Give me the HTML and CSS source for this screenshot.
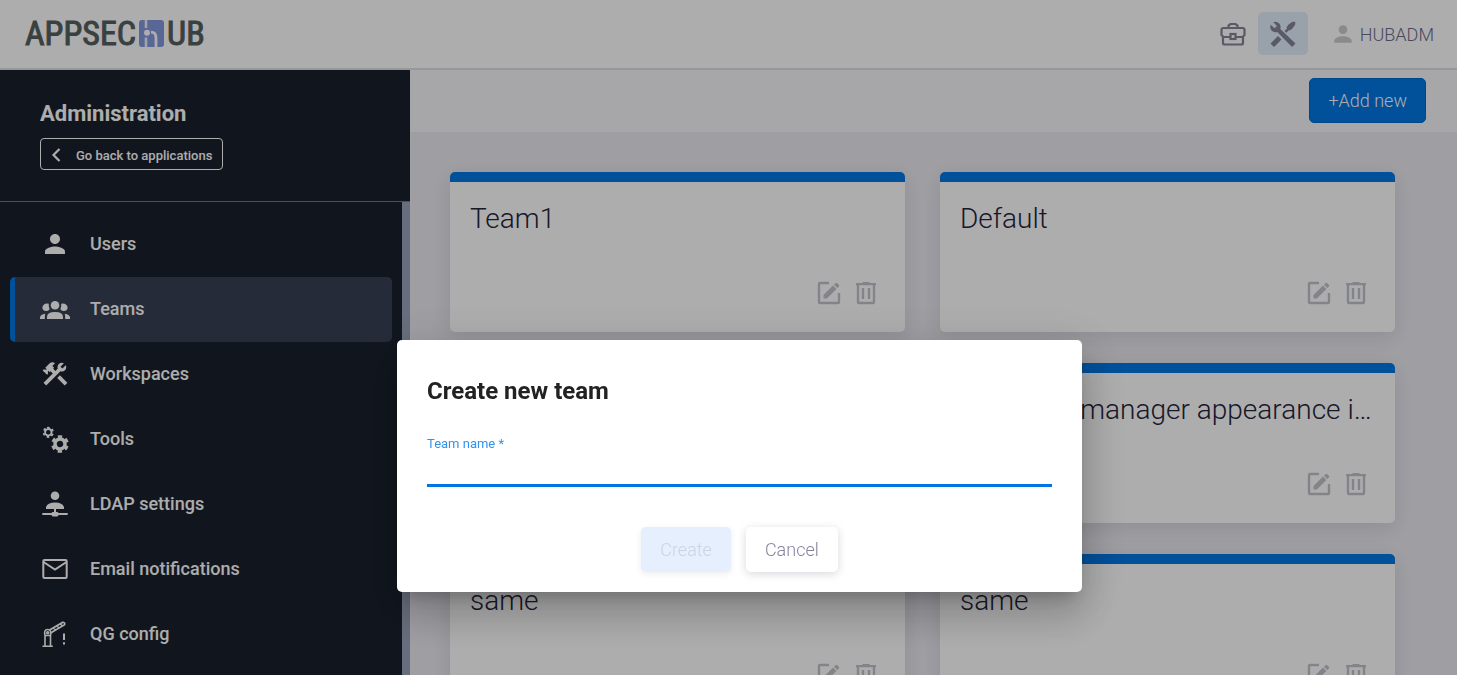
FILE: index.html
```html
<!DOCTYPE html>
<html lang="en">
<head>
<meta charset="utf-8">
<title>AppSecHub – Teams</title>
<link rel="stylesheet" href="styles.css">
</head>
<body>
<svg class="sprite" aria-hidden="true">
  <symbol id="edit" viewBox="0 0 24 24">
    <path d="M12 2H3Q2 2 2 3V21Q2 22 3 22H21Q22 22 22 21V12" fill="none" stroke="currentColor" stroke-width="2.400"/>
    <path d="M6.500 14 16 4.500 19.400 7.900 9.900 17.400H6.500zM17 3.700 18.800 1.900Q19.400 1.500 20 1.900L22 3.900Q22.500 4.500 22 5.200L20.300 6.900z" fill="currentColor"/>
  </symbol>
  <symbol id="trash" viewBox="0 0 20 24">
    <path d="M0 2H6L7 1H13L14 2H20V4.300H0zM5.800 7H8.200V18H5.800zM11.800 7H14.200V18H11.800z" fill="currentColor"/>
    <path d="M2 4V21Q2 22 3 22H17Q18 22 18 21V4" fill="none" stroke="currentColor" stroke-width="2.400"/>
  </symbol>
  <symbol id="person" viewBox="0 0 24 24">
    <path d="M12 12c2.21 0 4-1.79 4-4s-1.79-4-4-4-4 1.79-4 4 1.79 4 4 4zm0 2c-2.67 0-8 1.34-8 4v2h16v-2c0-2.66-5.33-4-8-4z" fill="currentColor"/>
  </symbol>
</svg>

<header class="topbar">
  <a class="logo" href="#" aria-label="AppSecHub">
    <span>APPSEC</span>
    <svg class="logo-mark" viewBox="0 0 25 27" aria-hidden="true">
      <rect width="25" height="27" rx="3" fill="#8498de"/>
      <path d="M7 0V8M7 17.500V27" fill="none" stroke="#fff" stroke-opacity=".85" stroke-width="2.600"/>
      <circle cx="8" cy="12.800" r="3" fill="#fff"/>
      <path d="M12 12.200Q17 12.200 17 18V27" fill="none" stroke="#fff" stroke-width="2.800"/>
    </svg>
    <span>UB</span>
  </a>
  <nav class="top-actions" aria-label="Account">
    <button class="top-btn" type="button" aria-label="Applications">
      <svg width="26" height="26" viewBox="0 0 26 26" fill="none" stroke="currentColor" stroke-width="2.200">
        <path d="M8.500 8V5.500L10.500 4H15.500L17.500 5.500V8"/>
        <path d="M10 17H3.500L1.500 15V10Q1.500 8 3.500 8H22.500Q24.500 8 24.500 10V15L22.500 17H16"/>
        <path d="M3 17V23Q3 24.500 5 24.500H21Q23 24.500 23 23V17"/>
        <rect x="10.500" y="14" width="5" height="5"/>
      </svg>
    </button>
    <button class="top-btn top-btn-active" type="button" aria-label="Administration">
      <svg width="28" height="28" viewBox="0 0 28 28" fill="currentColor">
        <path d="M4.200 3.200Q7.500 2 10.300 4.500Q12.300 7 11.300 10L26.500 24.500L23 28L8.300 13Q5 14 2.500 11.500Q.500 9 1.700 5.700L5.500 9.300L8 6.900z"/>
        <path d="M18.500 10.800L17.500 8.200L19.500 5.500L23.500 2.800H26.200V5.500L23.500 9.500L20.800 11.500zM18.300 9.300L20 11L17.300 13.700L15.500 12zM9 17L12.500 20.500L5 28L1.500 24.500z"/>
      </svg>
    </button>
    <a class="user" href="#">
      <svg width="26" height="26" aria-hidden="true"><use href="#person"/></svg>
      <span>HUBADM</span>
    </a>
  </nav>
</header>

<div class="layout">
  <aside class="sidebar">
    <div class="sidebar-head">
      <h1>Administration</h1>
      <button class="back" type="button">
        <svg width="10" height="14" viewBox="0 0 10 14" aria-hidden="true"><path d="M8.500 1 2.500 7 8.500 13" fill="none" stroke="currentColor" stroke-width="2.200"/></svg>
        <span>Go back to applications</span>
      </button>
    </div>
    <nav class="menu" aria-label="Administration">
      <a class="item" href="#"><svg class="icon"><use href="#person"/></svg><span>Users</span></a>
      <a class="item item-active" href="#" aria-current="page">
        <svg class="icon" viewBox="0 0 30 30" fill="currentColor">
          <circle cx="15" cy="11.300" r="4.300"/>
          <path d="M7 25V23Q7 18 15 18T23 23V25zM0 25V23.500Q.500 20.200 5.200 19.800Q4.800 21.500 4.800 25zM30 25V23.500Q29.500 20.200 24.800 19.800Q25.200 21.500 25.200 25z"/>
          <path d="M8.800 9.800Q6 9 4 10.500Q2 12 2.400 14.500Q3.500 17.500 6.800 17Q8.500 16.800 9.600 15.300Q8.300 12.500 8.800 9.800zM21.200 9.800Q24 9 26 10.500Q28 12 27.600 14.500Q26.500 17.500 23.200 17Q21.500 16.800 20.400 15.300Q21.700 12.500 21.200 9.800z"/>
        </svg><span>Teams</span></a>
      <a class="item" href="#">
        <svg class="icon" viewBox="0 0 24 24" fill="currentColor">
          <path d="M13.783 15.172l2.121-2.121 5.996 5.996-2.121 2.121zM17.5 10c1.930 0 3.500-1.570 3.500-3.500 0-.580-.160-1.120-.410-1.600l-2.700 2.700-1.490-1.490 2.700-2.700c-.480-.250-1.020-.410-1.600-.410C15.570 3 14 4.570 14 6.500c0 .410.080.800.210 1.160l-1.850 1.850-1.780-1.780.710-.710-1.410-1.410L12 3.490c-1.170-1.170-3.070-1.170-4.240 0L4.220 7.030l1.410 1.410H2.810l-.710.710 3.540 3.540.710-.710V9.150l1.410 1.410.710-.710 1.780 1.780-7.410 7.410 2.120 2.120L16.340 9.790c.360.130.750.210 1.160.210z"/>
        </svg><span>Workspaces</span></a>
      <a class="item" href="#">
        <svg class="icon" viewBox="0 0 30 30" fill="none" stroke="currentColor">
          <g transform="translate(8.300 8.300) rotate(-105)"><circle r="3.200" stroke-width="1.800"/><circle r="4.700" stroke-width="1.800" stroke-dasharray="2.450 2.470"/></g>
          <g transform="translate(20 20) rotate(-106)"><circle r="5" stroke-width="3.600"/><circle r="7.500" stroke-width="2.600" stroke-dasharray="4.200 3.654"/></g>
        </svg><span>Tools</span></a>
      <a class="item" href="#">
        <svg class="icon" viewBox="0 0 30 30" fill="currentColor">
          <circle cx="15" cy="6.700" r="4.300"/>
          <path d="M6 20V18Q7.500 13.500 15 13.500T24 18V20H16V23H17.500L18.700 24H27.700V26H18.700L17.500 27.500H12.500L11.300 26H2.300V24H11.300L12.500 23H14V20z"/>
        </svg><span>LDAP settings</span></a>
      <a class="item" href="#">
        <svg class="icon" viewBox="0 0 30 30" fill="none" stroke="currentColor" stroke-width="2">
          <rect x="3.300" y="6" width="23.400" height="18" rx="1.200"/><path d="M3.500 8 15 15.500 26.500 8"/>
        </svg><span>Email notifications</span></a>
      <a class="item" href="#">
        <svg class="icon" viewBox="0 0 30 30" fill="none" stroke="currentColor" stroke-width="1.600">
          <path d="M2.500 27.200H12.800M5 27V16.500H10.500V27M5 16.500Q3.500 10.500 7.700 10.500T10.500 16.500"/>
          <circle cx="7.700" cy="13.700" r="1"/>
          <path d="M9.500 11 23 3.200Q25.300 3.500 24.600 5.700L11 13.700M13.500 9 15.500 11M17 7 19 9M20.500 5 22.500 7" />
          <path d="M24 14.500V21M24 23.200V25.500" stroke-width="2"/>
        </svg><span>QG config</span></a>
    </nav>
  </aside>

  <main class="content">
    <div class="toolbar"><button class="btn btn-primary" type="button">+Add new</button></div>
    <div class="cards">
      <article class="card"><h2>Team1</h2><div class="card-actions"><button type="button" aria-label="Edit"><svg width="24" height="24"><use href="#edit"/></svg></button><button type="button" aria-label="Delete"><svg width="20" height="24"><use href="#trash"/></svg></button></div></article>
      <article class="card"><h2>Default</h2><div class="card-actions"><button type="button" aria-label="Edit"><svg width="24" height="24"><use href="#edit"/></svg></button><button type="button" aria-label="Delete"><svg width="20" height="24"><use href="#trash"/></svg></button></div></article>
      <article class="card"><h2></h2><div class="card-actions"><button type="button" aria-label="Edit"><svg width="24" height="24"><use href="#edit"/></svg></button><button type="button" aria-label="Delete"><svg width="20" height="24"><use href="#trash"/></svg></button></div></article>
      <article class="card"><h2>Checking manager appearance in team</h2><div class="card-actions"><button type="button" aria-label="Edit"><svg width="24" height="24"><use href="#edit"/></svg></button><button type="button" aria-label="Delete"><svg width="20" height="24"><use href="#trash"/></svg></button></div></article>
      <article class="card"><h2>same</h2><div class="card-actions"><button type="button" aria-label="Edit"><svg width="24" height="24"><use href="#edit"/></svg></button><button type="button" aria-label="Delete"><svg width="20" height="24"><use href="#trash"/></svg></button></div></article>
      <article class="card"><h2>same</h2><div class="card-actions"><button type="button" aria-label="Edit"><svg width="24" height="24"><use href="#edit"/></svg></button><button type="button" aria-label="Delete"><svg width="20" height="24"><use href="#trash"/></svg></button></div></article>
    </div>
  </main>
</div>

<div class="backdrop">
  <form class="dialog" role="dialog" aria-modal="true" aria-labelledby="dialog-title">
    <h2 id="dialog-title">Create new team</h2>
    <div class="field">
      <label for="team-name">Team name *</label>
      <input id="team-name" type="text" required>
    </div>
    <div class="dialog-actions">
      <button class="btn btn-create" type="submit" disabled>Create</button>
      <button class="btn btn-cancel" type="button">Cancel</button>
    </div>
  </form>
</div>
</body>
</html>
```

FILE: styles.css
```css
* { box-sizing: border-box; }

body {
  display: flex;
  flex-direction: column;
  height: 100vh;
  margin: 0;
  overflow: hidden;
  font-family: Roboto, "Liberation Sans", sans-serif;
  background: #ebeaf1;
  color: #25243d;
}

h1, h2 { margin: 0; }
a { color: inherit; text-decoration: none; }
button { font: inherit; cursor: pointer; }
svg { display: block; flex: none; }
.sprite { position: absolute; width: 0; height: 0; }

.topbar {
  display: flex;
  flex: none;
  justify-content: space-between;
  align-items: center;
  height: 70px;
  padding: 0 23px 2px 25px;
  background: #fff;
  border-bottom: 2px solid #dfdfdf;
}

.logo {
  display: flex;
  align-items: center;
  gap: 3px;
  color: #55605f;
  font-family: "Liberation Sans Narrow", "Roboto Condensed", Roboto, sans-serif;
  font-size: 34px;
  line-height: 40px;
  -webkit-text-stroke: 1px #55605f;
}
.logo-mark { width: 25px; height: 27px; }

.top-actions { display: flex; align-items: center; }
.top-btn {
  display: grid;
  place-items: center;
  width: 50px;
  height: 43px;
  padding: 0;
  border: 0;
  border-radius: 5px;
  background: none;
  color: #83839a;
}
.top-btn-active { background: #e2eefb; }
.user {
  display: flex;
  align-items: center;
  gap: 4px;
  margin-left: 22px;
  padding-top: 2px;
  color: #6d6c88;
  font-size: 18px;
  font-weight: 300;
}
.user svg { color: #ccc; }

.layout { display: flex; flex: 1; min-height: 0; }

.sidebar {
  display: flex;
  flex: none;
  flex-direction: column;
  width: 410px;
  background: #1a212d;
  color: #fff;
}
.sidebar-head {
  flex: none;
  height: 132px;
  padding: 28px 40px 0;
  border-bottom: 1px solid #777;
}
.sidebar-head h1 { font-size: 22px; font-weight: 700; line-height: 32px; }
.back {
  display: flex;
  align-items: center;
  gap: 15px;
  height: 32px;
  margin-top: 8px;
  padding: 2px 10px 0;
  border: 1px solid #fff;
  border-radius: 4px;
  background: none;
  color: #fff;
  font-size: 13px;
  font-weight: 500;
}
.menu {
  flex: 1;
  min-height: 0;
  padding: 10px 10px 0;
  overflow: hidden;
  border-right: 8px solid #99a3b9;
}
.item {
  display: flex;
  align-items: center;
  gap: 20px;
  height: 65px;
  padding: 0 0 2px 25px;
  border-left: 5px solid transparent;
  border-radius: 5px;
  font-size: 18px;
  font-weight: 500;
}
.item-active { background: #394056; border-left-color: #0076e4; }
.icon { width: 30px; height: 30px; }

.content { flex: 1; min-width: 0; }
.toolbar {
  display: flex;
  justify-content: flex-end;
  padding: 8px 31px 9px;
  background: #f7f7fa;
}
.btn {
  height: 45px;
  padding: 0 19px;
  border: 0;
  border-radius: 5px;
  font-size: 18px;
  font-weight: 300;
}
.btn-primary { padding: 0 18px; border: 1px solid #0069cc; background: #0076e4; color: #fff; }

.cards {
  display: grid;
  grid-template-columns: repeat(2, minmax(0, 1fr));
  gap: 31px 35px;
  padding: 40px 62px 40px 40px;
}
.card {
  display: flex;
  flex-direction: column;
  justify-content: space-between;
  height: 160px;
  padding: 19px 20px 27px;
  border-top: 10px solid #0076e4;
  border-radius: 5px;
  background: #fff;
  box-shadow: 0 5px 20px rgba(37, 36, 61, 0.12);
}
.card h2 {
  min-height: 36px;
  overflow: hidden;
  font-size: 28px;
  font-weight: 300;
  line-height: 36px;
  text-overflow: ellipsis;
  white-space: nowrap;
}
.card-actions { display: flex; justify-content: flex-end; gap: 15px; padding-right: 9px; }
.card-actions button { padding: 0; border: 0; background: none; color: #c2c1cc; }

.backdrop {
  position: fixed;
  inset: 0;
  display: flex;
  justify-content: center;
  align-items: flex-start;
  padding: 340px 0 0 22px;
  background: rgba(0, 0, 0, 0.32);
}
.dialog {
  width: 685px;
  padding: 30px 30px 20px;
  border-radius: 5px;
  background: #fff;
  box-shadow: 0 11px 15px -7px rgba(0, 0, 0, 0.2), 0 24px 38px 3px rgba(0, 0, 0, 0.14), 0 9px 46px 8px rgba(0, 0, 0, 0.12);
}
.dialog h2 { color: #222; font-size: 24px; font-weight: 700; line-height: 42px; }
.field { display: flex; flex-direction: column; margin-top: 22px; }
.field label { color: #3293e9; font-size: 13px; line-height: 20px; }
.field input {
  height: 33px;
  padding: 0;
  border: 0;
  border-bottom: 3px solid #0076e4;
  outline: 0;
  background: none;
  font: inherit;
  font-size: 18px;
}
.dialog-actions { display: flex; justify-content: center; gap: 15px; margin-top: 40px; }
.btn-create { background: #e5effd; color: #c9d4e6; box-shadow: 0 2px 6px rgba(37, 36, 61, 0.08); }
.btn-cancel { background: #fff; color: #85849f; box-shadow: 0 2px 8px rgba(37, 36, 61, 0.18); }
```
